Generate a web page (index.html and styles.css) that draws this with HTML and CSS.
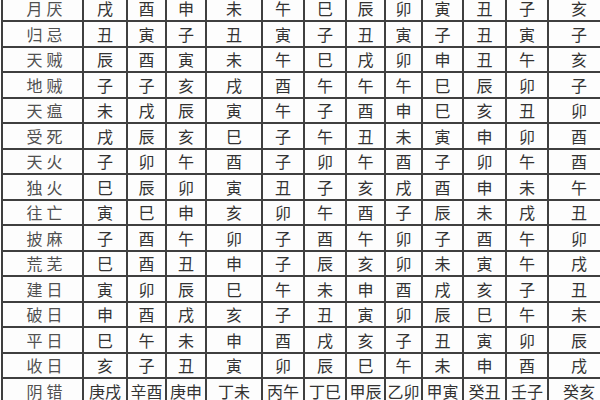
FILE: index.html
```html
<!DOCTYPE html>
<html lang="zh-CN">
<head>
<meta charset="utf-8">
<title>神煞表</title>
<link rel="stylesheet" href="styles.css">
</head>
<body>
<div class="grid">
<div class="c lbl">月厌</div><div class="c">戌</div><div class="c">酉</div><div class="c">申</div><div class="c">未</div><div class="c">午</div><div class="c">巳</div><div class="c">辰</div><div class="c">卯</div><div class="c">寅</div><div class="c">丑</div><div class="c">子</div><div class="c">亥</div>
<div class="c lbl">归忌</div><div class="c">丑</div><div class="c">寅</div><div class="c">子</div><div class="c">丑</div><div class="c">寅</div><div class="c">子</div><div class="c">丑</div><div class="c">寅</div><div class="c">子</div><div class="c">丑</div><div class="c">寅</div><div class="c">子</div>
<div class="c lbl">天贼</div><div class="c">辰</div><div class="c">酉</div><div class="c">寅</div><div class="c">未</div><div class="c">午</div><div class="c">巳</div><div class="c">戌</div><div class="c">卯</div><div class="c">申</div><div class="c">丑</div><div class="c">午</div><div class="c">亥</div>
<div class="c lbl">地贼</div><div class="c">子</div><div class="c">子</div><div class="c">亥</div><div class="c">戌</div><div class="c">酉</div><div class="c">午</div><div class="c">午</div><div class="c">午</div><div class="c">巳</div><div class="c">辰</div><div class="c">卯</div><div class="c">子</div>
<div class="c lbl">天瘟</div><div class="c">未</div><div class="c">戌</div><div class="c">辰</div><div class="c">寅</div><div class="c">午</div><div class="c">子</div><div class="c">酉</div><div class="c">申</div><div class="c">巳</div><div class="c">亥</div><div class="c">丑</div><div class="c">卯</div>
<div class="c lbl">受死</div><div class="c">戌</div><div class="c">辰</div><div class="c">亥</div><div class="c">巳</div><div class="c">子</div><div class="c">午</div><div class="c">丑</div><div class="c">未</div><div class="c">寅</div><div class="c">申</div><div class="c">卯</div><div class="c">酉</div>
<div class="c lbl">天火</div><div class="c">子</div><div class="c">卯</div><div class="c">午</div><div class="c">酉</div><div class="c">子</div><div class="c">卯</div><div class="c">午</div><div class="c">酉</div><div class="c">子</div><div class="c">卯</div><div class="c">午</div><div class="c">酉</div>
<div class="c lbl">独火</div><div class="c">巳</div><div class="c">辰</div><div class="c">卯</div><div class="c">寅</div><div class="c">丑</div><div class="c">子</div><div class="c">亥</div><div class="c">戌</div><div class="c">酉</div><div class="c">申</div><div class="c">未</div><div class="c">午</div>
<div class="c lbl">往亡</div><div class="c">寅</div><div class="c">巳</div><div class="c">申</div><div class="c">亥</div><div class="c">卯</div><div class="c">午</div><div class="c">酉</div><div class="c">子</div><div class="c">辰</div><div class="c">未</div><div class="c">戌</div><div class="c">丑</div>
<div class="c lbl">披麻</div><div class="c">子</div><div class="c">酉</div><div class="c">午</div><div class="c">卯</div><div class="c">子</div><div class="c">酉</div><div class="c">午</div><div class="c">卯</div><div class="c">子</div><div class="c">酉</div><div class="c">午</div><div class="c">卯</div>
<div class="c lbl">荒芜</div><div class="c">巳</div><div class="c">酉</div><div class="c">丑</div><div class="c">申</div><div class="c">子</div><div class="c">辰</div><div class="c">亥</div><div class="c">卯</div><div class="c">未</div><div class="c">寅</div><div class="c">午</div><div class="c">戌</div>
<div class="c lbl">建日</div><div class="c">寅</div><div class="c">卯</div><div class="c">辰</div><div class="c">巳</div><div class="c">午</div><div class="c">未</div><div class="c">申</div><div class="c">酉</div><div class="c">戌</div><div class="c">亥</div><div class="c">子</div><div class="c">丑</div>
<div class="c lbl">破日</div><div class="c">申</div><div class="c">酉</div><div class="c">戌</div><div class="c">亥</div><div class="c">子</div><div class="c">丑</div><div class="c">寅</div><div class="c">卯</div><div class="c">辰</div><div class="c">巳</div><div class="c">午</div><div class="c">未</div>
<div class="c lbl">平日</div><div class="c">巳</div><div class="c">午</div><div class="c">未</div><div class="c">申</div><div class="c">酉</div><div class="c">戌</div><div class="c">亥</div><div class="c">子</div><div class="c">丑</div><div class="c">寅</div><div class="c">卯</div><div class="c">辰</div>
<div class="c lbl">收日</div><div class="c">亥</div><div class="c">子</div><div class="c">丑</div><div class="c">寅</div><div class="c">卯</div><div class="c">辰</div><div class="c">巳</div><div class="c">午</div><div class="c">未</div><div class="c">申</div><div class="c">酉</div><div class="c">戌</div>
<div class="c lbl">阴错</div><div class="c">庚戌</div><div class="c">辛酉</div><div class="c">庚申</div><div class="c">丁未</div><div class="c">丙午</div><div class="c">丁巳</div><div class="c">甲辰</div><div class="c">乙卯</div><div class="c">甲寅</div><div class="c">癸丑</div><div class="c">壬子</div><div class="c">癸亥</div>
</div>
</body>
</html>
```
FILE: styles.css
```css
html, body {
  margin: 0;
  padding: 0;
  background: #ffffff;
  overflow: hidden;
}
body {
  width: 600px;
  height: 400px;
}
.grid {
  display: grid;
  grid-template-columns: 79px 42px 37px 38px 54px 40px 40px 37px 35px 39px 41px 40px 60px;
  grid-auto-rows: 23.5px;
  gap: 2px;
  padding: 2px 0 2px 2px;
  margin: -5.5px 0 0 1px;
  background: #3f3f3f;
  width: max-content;
  font-family: "Noto Sans CJK SC", "Noto Sans CJK TC", sans-serif;
  font-size: 16px;
  font-weight: 400;
  color: #333333;
}
.c {
  background: #fdfdfd;
  display: flex;
  align-items: center;
  justify-content: center;
  line-height: 1;
  white-space: nowrap;
}
.lbl {
  color: #505050;
  letter-spacing: 4px;
  padding-left: 8px;
}
```
